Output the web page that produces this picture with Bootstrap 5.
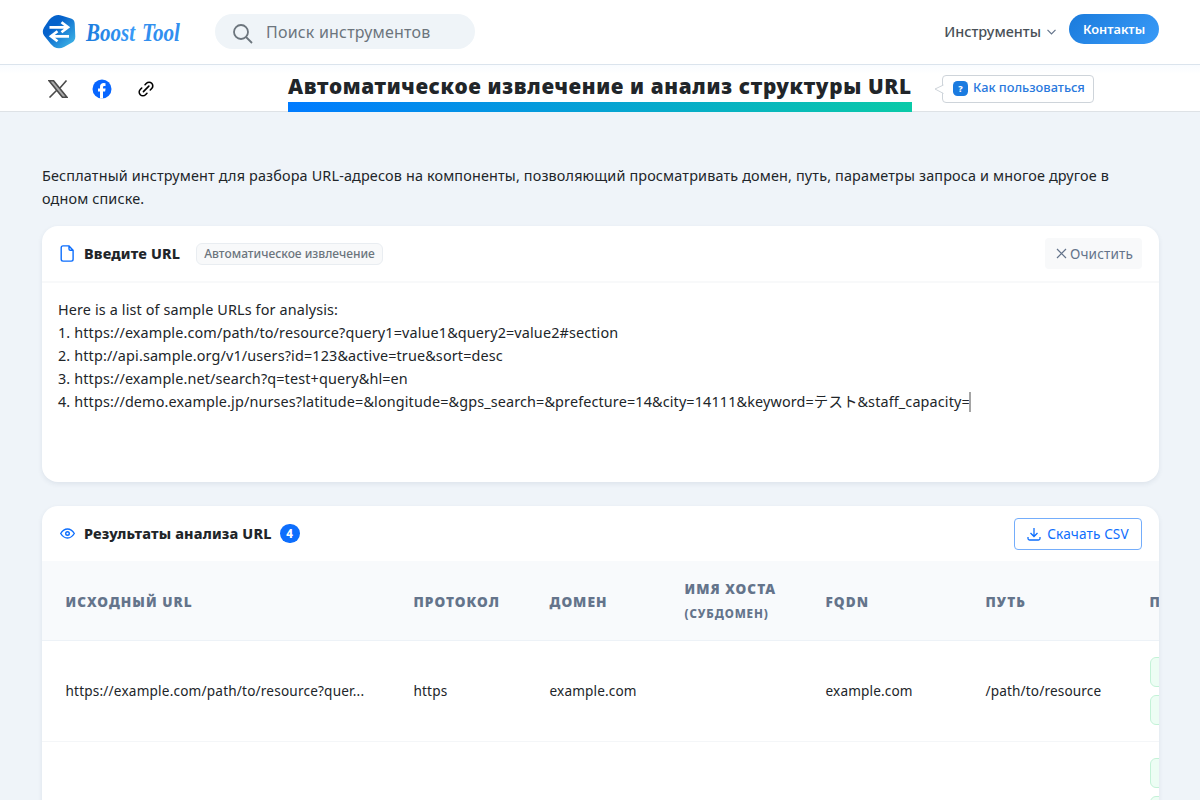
<!DOCTYPE html>
<html lang="ru">
<head>
<meta charset="utf-8">
<meta name="viewport" content="width=device-width, initial-scale=1">
<title>Boost Tool</title>
<link href="https://cdn.jsdelivr.net/npm/bootstrap@5.3.0/dist/css/bootstrap.min.css" rel="stylesheet">
<style>
body{font-family:"Noto Sans","Noto Sans CJK JP",sans-serif;background:#eff4f9;color:#212529;height:800px;overflow:hidden}
svg{display:block;flex:none}
.topnav{height:65px;background:#fff;border-bottom:1px solid #dbe4ed;padding:0 41px 0 42px}
.brand-link{width:173px}
.searchbox{width:260px;height:35px;margin-top:-2px;border-radius:18px;background:#eff4f8;padding:2px 0 0 18px;color:#6c757d;font-size:16px;gap:13px;letter-spacing:.2px}
.search-icon{margin-top:3px}
.menu-link{color:#495057;font-size:14.4px;font-weight:500;gap:6px}
.contact{width:90px;height:30px;border-radius:15px;background:linear-gradient(135deg,#1a7bdc,#3a9bf8);color:#fff;font-size:12.8px;font-weight:600;margin:-6px 0 0 13px;padding-top:1px}
.subbar{height:47px;border-bottom:1px solid #dee2e6;background:linear-gradient(#f9fcff,#fff 9px);padding-left:48px}
.social{width:240px;gap:24px;padding-top:1px}
.page-title{width:624px;font-size:20.8px;font-weight:900;letter-spacing:.65px;line-height:34px;margin:4px 0 0;white-space:nowrap;height:44px}
.page-title::after{content:"";display:block;height:10px;margin-top:-1px;background:linear-gradient(90deg,#007bff,#0acaa8)}
.howto{margin:10px 0 0 30px;width:152px;height:28px;border:1px solid #ced4da;border-radius:4px;color:#2878dd;font-size:12.8px;font-weight:500;padding-left:10px;gap:5px;background:#fff;position:relative}
.howtext{padding-bottom:2px}
.tail{position:absolute;left:-9px;top:8px}
.qmark{width:15px;height:15px;border-radius:4.5px;background:#1b7be0;color:#fff;font-size:9px;font-weight:800;margin-top:-1px}
.wrapper{padding:52px 41px 0 42px}
.intro{font-size:14.4px;line-height:23px;margin:0 0 16px;height:46px;letter-spacing:.153px;padding-right:10px}
.panel{background:#fff;border-radius:16px;box-shadow:0 2px 5px rgba(40,70,95,.09);overflow:hidden}
.panel-results{margin-top:24px}
.panel-head{height:57px;padding:0 17px;border-bottom:2px solid #f8f9fa}
.panel-results .panel-head{height:55px;border:0}
.panel-name{font-size:14.4px;font-weight:800;margin:0;line-height:22px;letter-spacing:.17px}
.tagchip{width:187px;height:22px;margin-left:16px;border:1px solid #e9edf1;border-radius:6px;background:#f8f9fa;color:#6c757d;font-size:12px;font-weight:500}
.clearbtn{width:97px;height:31px;border-radius:4px;background:#f8f9fa;color:#64748b;font-size:13.6px;gap:3px;letter-spacing:.15px}
.clearbtn span{padding:2px 0 0}
.clearbtn svg{margin-left:2px}
.csvbtn span{padding:2px 0 0 1px}
.urls{height:199px;padding:15px 16px;font-size:14.4px;line-height:23px;white-space:pre;letter-spacing:.133px}
.caret{display:inline-block;width:2px;height:20px;background:#a5a5a5;vertical-align:-5px;margin-left:-1px}
.count{width:20px;height:19px;border-radius:10px;background:#0d6efd;color:#fff;font-size:11.5px;font-weight:800;margin-left:8px}
.csvbtn{width:128px;height:32px;border:1px solid #74adfb;border-radius:4px;color:#0d6efd;font-size:13.6px;gap:5px;letter-spacing:.12px}
.results{table-layout:fixed;width:1384px;margin:0 0 0 -.5px;border-collapse:separate;border-spacing:0}
.results th{height:80px;background:#f8fafc;border-bottom:1px solid #edf2f7;padding:2px 24px 0;color:#64748b;font-size:13.6px;font-weight:900;letter-spacing:1.02px;line-height:24px}
.results th small{font-size:11.6px;font-weight:800;letter-spacing:.87px}
.results td{height:101px;border-bottom:1px solid #f4f6f8;padding:0 24px;font-size:13.6px;white-space:nowrap;letter-spacing:.15px}
.results td:first-child{letter-spacing:.19px}
.param{width:200px;height:30px;border:1px solid #c3f2d7;border-radius:6px;background:#edfdf4;margin-bottom:8px}
</style>
</head>
<body>
<nav class="topnav d-flex align-items-center">
  <a class="brand-link d-block text-decoration-none" href="#">
    <svg width="145" height="40" viewBox="0 0 145 40">
      <defs>
        <linearGradient id="lg" x1="0" y1="0" x2="1" y2="1"><stop offset=".35" stop-color="#0562cb"/><stop offset="1" stop-color="#47c0ea"/></linearGradient>
        <linearGradient id="tg"><stop offset="0" stop-color="#1b7bdd"/><stop offset="1" stop-color="#3a9bf8"/></linearGradient>
      </defs>
      <g transform="translate(0 .6)">
      <path d="M12 3.500Q16 1.500 20 3.200L29 6Q32.500 7 32.700 11L33.300 24Q33.300 28 30 30L22 34.500Q17 37 12 34.500Q8 31 6 28L2 23Q-.4 19.500 2 15L7 7.500Q9 4.800 12 3.500Z" fill="url(#lg)"/>
      <path d="M7.500 15.500H25M19.500 10.500L26 15.500L19.500 20.500M27 24.500H10M15.500 19.500L9 24.500L15.500 29.500" fill="none" stroke="#fff" stroke-width="2.700" transform="translate(0 -.8)"/>
      </g>
      <text x="44" y="29" textLength="49" lengthAdjust="spacingAndGlyphs" font-family="Liberation Serif" font-size="26" font-weight="700" font-style="italic" fill="url(#tg)">Boost</text>
      <text x="100" y="29" textLength="38" lengthAdjust="spacingAndGlyphs" font-family="Liberation Serif" font-size="26" font-weight="700" font-style="italic" fill="#318fef">Tool</text>
    </svg>
  </a>
  <div class="searchbox d-flex align-items-center">
    <svg class="search-icon" width="20" height="20" viewBox="0 0 20 20" fill="none" stroke="#6c757d" stroke-width="1.800"><circle cx="8" cy="8" r="7"/><path d="M13 13L19 19"/></svg>
    <span>Поиск инструментов</span>
  </div>
  <div class="ms-auto d-flex align-items-center">
    <span class="menu-link d-flex align-items-center">Инструменты <svg width="9" height="6" viewBox="0 0 9 6" fill="none" stroke="#64748b" stroke-width="1.200"><path d="M.5 .8L4.500 4.800L8.500 .8"/></svg></span>
    <a class="contact d-flex align-items-center justify-content-center text-decoration-none" href="#">Контакты</a>
  </div>
</nav>
<header class="subbar d-flex">
  <div class="social d-flex align-items-center">
    <svg width="20" height="18" viewBox="0 0 20 18"><path d="M1 .7H5.500L19 17.300H14.500ZM18.500 .5L11.500 8.500M8.500 10.500L1.500 17.500" fill="#aaa" stroke="#4b4b4b" stroke-width="1.600"/></svg>
    <svg width="20" height="20" viewBox="0 0 20 20"><circle cx="10" cy="10" r="9.500" fill="#0866ff"/><path d="M8 19.500V12.500H6V9.500H8V8C8 5.200 9.500 4.100 11.600 4.100Q12.700 4.100 13.500 4.300V7H12Q11 7 11 8.200V9.500H13.600L13.100 12.500H11V19.500Z" fill="#fff"/></svg>
    <svg width="20" height="20" viewBox="0 0 20 20" fill="none" stroke="#000" stroke-width="1.700" stroke-linecap="round"><path d="M7.300 12.700L13 7M9 5.500L10.500 4A3.700 3.700 0 0 1 16 9.500L14.500 11M5.500 9L4 10.500A3.700 3.700 0 0 0 9.500 16L11 14.500" transform="translate(.5 .5) scale(.95)"/></svg>
  </div>
  <h1 class="page-title">Автоматическое извлечение и анализ структуры URL</h1>
  <a class="howto d-flex align-items-center text-decoration-none" href="#">
    <svg class="tail" width="10" height="11" viewBox="0 0 10 11"><path d="M9.500 1L1 5L9.500 9.500" fill="#fff" stroke="#ced4da"/></svg>
    <span class="qmark d-flex align-items-center justify-content-center">?</span><span class="howtext">Как пользоваться</span>
  </a>
</header>
<main class="wrapper">
  <p class="intro">Бесплатный инструмент для разбора URL-адресов на компоненты, позволяющий просматривать домен, путь, параметры запроса и многое другое в одном списке.</p>
  <section class="panel">
    <div class="panel-head d-flex align-items-center">
      <svg class="me-2" width="17" height="17" viewBox="0 0 17 17" fill="none" stroke="#0d6efd" stroke-width="1.400"><path d="M10 .9H4Q2.200 .9 2.200 2.700V14.300Q2.200 16.100 4 16.100H12.300Q14.100 16.100 14.100 14.300V5.200ZM10 .9V3.900Q10 5.200 11.300 5.200H14.100"/></svg>
      <h2 class="panel-name">Введите URL</h2>
      <span class="tagchip d-flex align-items-center justify-content-center">Автоматическое извлечение</span>
      <button class="clearbtn border-0 ms-auto p-0 d-flex align-items-center justify-content-center"><svg width="11" height="11" viewBox="0 0 11 11" stroke="#64748b" stroke-width="1.200"><path d="M1 1L10 10M10 1L1 10"/></svg><span>Очистить</span></button>
    </div>
    <div class="urls">Here is a list of sample URLs for analysis:
1. https://example.com/path/to/resource?query1=value1&amp;query2=value2#section
2. http://api.sample.org/v1/users?id=123&amp;active=true&amp;sort=desc
3. https://example.net/search?q=test+query&amp;hl=en
4. https://demo.example.jp/nurses?latitude=&amp;longitude=&amp;gps_search=&amp;prefecture=14&amp;city=14111&amp;keyword=テスト&amp;staff_capacity=<span class="caret"></span></div>
  </section>
  <section class="panel panel-results">
    <div class="panel-head d-flex align-items-center">
      <svg class="me-2" width="17" height="17" viewBox="0 0 17 17" fill="none" stroke="#0d6efd" stroke-width="1.400"><path d="M1.700 8.500Q4.500 4 8.500 4T15.300 8.500Q12.500 13 8.500 13T1.700 8.500Z"/><circle cx="8.500" cy="8.500" r="1.800"/></svg>
      <h2 class="panel-name">Результаты анализа URL</h2>
      <span class="count d-flex align-items-center justify-content-center">4</span>
      <button class="csvbtn bg-white ms-auto p-0 d-flex align-items-center justify-content-center"><svg width="14" height="14" viewBox="0 0 14 14" fill="none" stroke="#0d6efd" stroke-width="1.300"><path d="M7 1V9.500M3.500 6L7 9.500L10.500 6M1 10V11.500Q1 13 2.500 13H11.500Q13 13 13 11.500V10"/></svg><span>Скачать CSV</span></button>
    </div>
    <table class="results">
      <colgroup><col style="width:348px"><col style="width:136px"><col style="width:135px"><col style="width:141px"><col style="width:160px"><col style="width:164px"><col style="width:300px"></colgroup>
      <thead><tr><th>ИСХОДНЫЙ URL</th><th>ПРОТОКОЛ</th><th>ДОМЕН</th><th>ИМЯ ХОСТА<br><small>(СУБДОМЕН)</small></th><th>FQDN</th><th>ПУТЬ</th><th>ПАРАМЕТРЫ</th></tr></thead>
      <tbody>
        <tr><td>https://example.com/path/to/resource?quer...</td><td>https</td><td>example.com</td><td></td><td>example.com</td><td>/path/to/resource</td><td><div class="param"></div><div class="param mb-0"></div></td></tr>
        <tr><td></td><td></td><td></td><td></td><td></td><td></td><td><div class="param"></div><div class="param mb-0"></div></td></tr>
      </tbody>
    </table>
  </section>
</main>
<script src="https://cdn.jsdelivr.net/npm/bootstrap@5.3.0/dist/js/bootstrap.bundle.min.js"></script>
</body>
</html>
